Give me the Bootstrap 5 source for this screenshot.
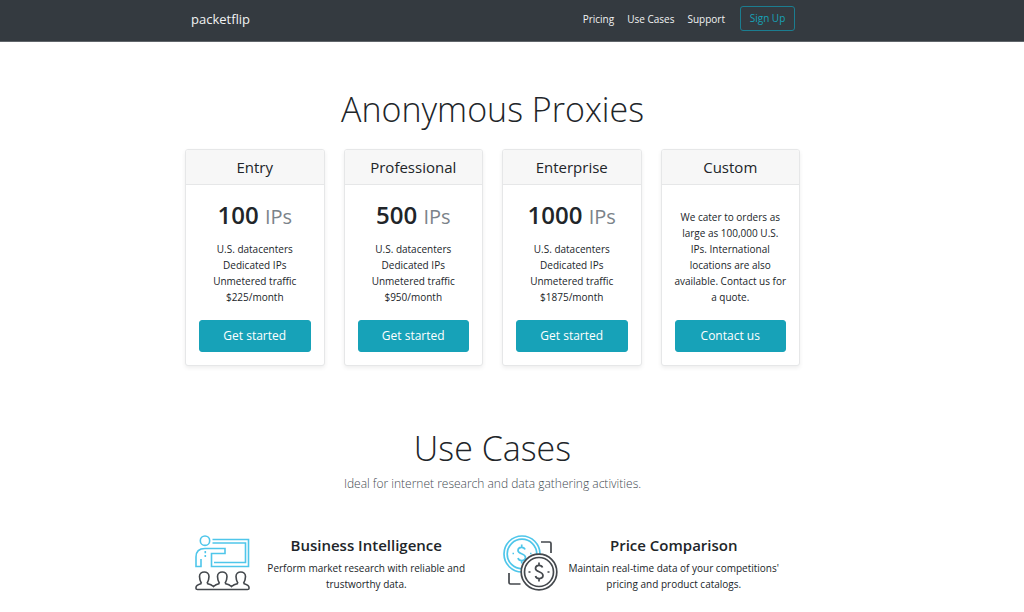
<!DOCTYPE html>
<html lang="en">
<head>
<meta charset="utf-8">
<meta name="viewport" content="width=device-width, initial-scale=1">
<title>packetflip</title>
<link href="https://cdn.jsdelivr.net/npm/bootstrap@5.3.0/dist/css/bootstrap.min.css" rel="stylesheet">
<style>
  body { font-family: "Open Sans", "Noto Sans", sans-serif; font-size: 10px; line-height: 16px; color: #212529; overflow-x: hidden; }
  .site-bar { background: #343a40; border-bottom: 1px solid #60656a; padding: 6px 0 10px; }
  .page-shift { padding-right: 39px; }
  .page-width { width: 100%; max-width: 615px; margin: 0 auto; }
  .top-nav { padding: 0 5px 0 6px; gap: 13px; }
  .brand-name { font-size: 13px; line-height: 20px; padding: 0; margin: 0; color: #f1f2f3; }
  .brand-name:hover { color: #fff; }
  .top-link { color: #f1f2f3; text-decoration: none; }
  .btn-signup { --bs-btn-color: #17a2b8; --bs-btn-border-color: #1b7d90; --bs-btn-hover-bg: #17a2b8; --bs-btn-hover-color: #fff;
    --bs-btn-padding-x: 7px; --bs-btn-padding-y: 3px; --bs-btn-font-size: 10px; --bs-btn-border-radius: 3px; line-height: 17px; width: 55px; margin-left: 2px; white-space: nowrap; }
  .hero-title { font-size: 34px; line-height: 44px; font-weight: 300; margin: 0; }
  .plan-row { --bs-gutter-x: 19px; }
  .plan { --bs-card-border-color: #e6e7e8; --bs-card-border-radius: 3px; --bs-card-inner-border-radius: 2px; --bs-card-cap-bg: #f7f7f7;
    --bs-card-cap-padding-y: 7px; --bs-card-cap-padding-x: 12px; --bs-card-spacer-x: 13px; --bs-card-spacer-y: 13px; box-shadow: 0 2px 4px rgba(0,0,0,.07); }
  .plan h2 { font-size: 15px; line-height: 20px; font-weight: 400; margin: 0; }
  .plan-size { font-size: 24px; line-height: 34px; font-weight: 600; margin: 0 0 7px; white-space: nowrap; }
  .plan-size small { font-size: 20px; font-weight: 400; color: #7b838a; }
  .plan-text { margin: 0 -1px 15px; }
  .btn-plan { --bs-btn-bg: #17a2b8; --bs-btn-border-color: #17a2b8; --bs-btn-color: #fff; --bs-btn-hover-bg: #138496; --bs-btn-hover-color: #fff;
    --bs-btn-padding-y: 5px; --bs-btn-padding-x: 8px; --bs-btn-font-size: 12px; --bs-btn-border-radius: 3px; line-height: 20px; }
  .use-intro { font-size: 12px; line-height: 20px; font-weight: 300; color: #444b51; margin: 4px 0 0; }
  .case-row { padding: 41px 0 24px; }
  .case { padding: 0 18px 0 10px; gap: 8px; }
  .case svg { width: 55px; height: 56px; flex: none; }
  .case h3 { font-size: 15px; line-height: 20px; font-weight: 600; margin: 0 0 5px; }
  .case p { margin: 0; }
  .plans { padding: 45px 0 60px; }
  .plans .hero-title { margin-bottom: 18px; }
</style>
</head>
<body>
<header class="site-bar">
  <div class="page-shift">
    <nav class="page-width top-nav d-flex align-items-center">
      <a class="navbar-brand brand-name me-auto" href="#">packetflip</a>
      <a class="top-link" href="#plans">Pricing</a>
      <a class="top-link" href="#cases">Use Cases</a>
      <a class="top-link" href="#">Support</a>
      <a class="btn btn-signup" href="#">Sign Up</a>
    </nav>
  </div>
</header>
<main class="page-shift text-center">
  <section class="page-width plans" id="plans">
    <h1 class="hero-title">Anonymous Proxies</h1>
    <div class="row row-cols-4 plan-row">
      <div class="col"><article class="card plan h-100">
        <div class="card-header"><h2>Entry</h2></div>
        <div class="card-body d-flex flex-column">
          <p class="plan-size">100 <small>IPs</small></p>
          <ul class="list-unstyled plan-text"><li>U.S. datacenters</li><li>Dedicated IPs</li><li>Unmetered traffic</li><li>$225/month</li></ul>
          <button type="button" class="btn btn-plan w-100 mt-auto">Get started</button>
        </div>
      </article></div>
      <div class="col"><article class="card plan h-100">
        <div class="card-header"><h2>Professional</h2></div>
        <div class="card-body d-flex flex-column">
          <p class="plan-size">500 <small>IPs</small></p>
          <ul class="list-unstyled plan-text"><li>U.S. datacenters</li><li>Dedicated IPs</li><li>Unmetered traffic</li><li>$950/month</li></ul>
          <button type="button" class="btn btn-plan w-100 mt-auto">Get started</button>
        </div>
      </article></div>
      <div class="col"><article class="card plan h-100">
        <div class="card-header"><h2>Enterprise</h2></div>
        <div class="card-body d-flex flex-column">
          <p class="plan-size">1000 <small>IPs</small></p>
          <ul class="list-unstyled plan-text"><li>U.S. datacenters</li><li>Dedicated IPs</li><li>Unmetered traffic</li><li>$1875/month</li></ul>
          <button type="button" class="btn btn-plan w-100 mt-auto">Get started</button>
        </div>
      </article></div>
      <div class="col"><article class="card plan h-100">
        <div class="card-header"><h2>Custom</h2></div>
        <div class="card-body d-flex flex-column justify-content-end">
          <p class="plan-text text-nowrap">We cater to orders as<br>large as 100,000 U.S.<br>IPs. International<br>locations are also<br>available. Contact us for<br>a quote.</p>
          <button type="button" class="btn btn-plan w-100">Contact us</button>
        </div>
      </article></div>
    </div>
  </section>
  <section class="page-width" id="cases">
    <h2 class="hero-title">Use Cases</h2>
    <p class="use-intro">Ideal for internet research and data gathering activities.</p>
    <div class="row g-0 case-row">
      <div class="col-6 d-flex case">
        <svg viewBox="0 0 55 56" fill="none" stroke-width="1.6" aria-hidden="true">
          <g stroke="#4fc6ea">
            <circle cx="10" cy="5.700" r="4.700"/>
            <path d="M17.500 4.500H53.500V31.500H16.500V18.500H30V13.500H10Q1 13.500 1 22V31.500H6V24"/>
            <path d="M17.500 8H50.500V27.500H19"/>
            <path d="M10.300 16v2.300M10.300 20v2"/>
          </g>
          <g stroke="#44484d">
            <path d="M6.500 48.500Q1 50 1 52.500V53.500Q1 54.500 2.500 54.500H52.500Q54 54.500 54 53.500V52.500Q54 50 48.500 48.500"/>
            <path d="M12 48.500Q16.500 49.500 18.500 51.500Q20.500 49.500 24.500 48.500M30 48.500Q34.500 49.500 36.500 51.500Q38.500 49.500 43 48.500"/>
            <path d="M6.500 48.500C5 46 4.500 43 4.500 41.500C4.500 35.500 14 35.500 14 41.500C14 43 13.500 46 12 48.500M24.500 48.500C23 46 22.500 43 22.500 41.500C22.500 35.500 32 35.500 32 41.500C32 43 31.500 46 30 48.500M43 48.500C41.500 46 41 43 41 41.500C41 35.500 50.500 35.500 50.500 41.500C50.500 43 50 46 48.500 48.500"/>
          </g>
        </svg>
        <div class="flex-grow-1"><h3>Business Intelligence</h3><p>Perform market research with reliable and trustworthy data.</p></div>
      </div>
      <div class="col-6 d-flex case">
        <svg viewBox="0 0 55 56" fill="none" stroke-width="1.7" aria-hidden="true">
          <g stroke="#4fc6ea">
            <circle cx="19" cy="19" r="18"/><circle cx="19" cy="19" r="14.800"/>
            <path d="M22 14.500C21 11.500 15 11.500 15 15.500C15 19.500 22.500 18 22.500 22.500C22.500 26.500 16 26.500 15 23M18.700 9.500v3M18.700 25.500v3M9.500 18.500h1.500M27 18.500h1.500"/>
          </g>
          <path d="M38 7H46.500Q48 7 48 8.500V18M6 38V47.500Q6 49 7.500 49H17.500" stroke="#44484d"/>
          <g stroke="#44484d">
            <circle cx="36" cy="37" r="17.800" fill="#fff"/><circle cx="36" cy="37" r="14.500"/>
            <path d="M39.500 32.500C38.500 29.500 32.500 29.500 32.500 33.500C32.500 37.500 40 36 40 40.500C40 44.500 33.500 44.500 32.500 41M36 27.500v3M36 43.500v3M25.500 37h2M44.500 37h2"/>
          </g>
        </svg>
        <div class="flex-grow-1"><h3>Price Comparison</h3><p>Maintain real-time data of your competitions' pricing and product catalogs.</p></div>
      </div>
    </div>
  </section>
</main>
<script src="https://cdn.jsdelivr.net/npm/bootstrap@5.3.0/dist/js/bootstrap.bundle.min.js"></script>
</body>
</html>
